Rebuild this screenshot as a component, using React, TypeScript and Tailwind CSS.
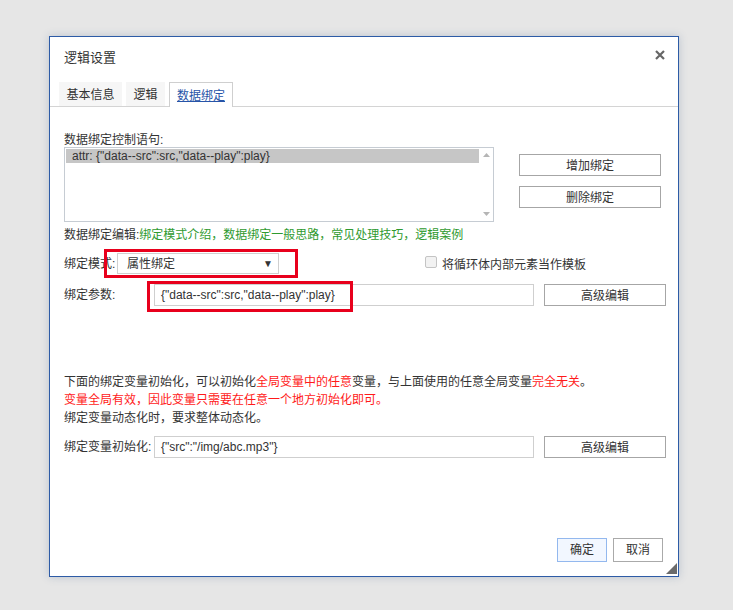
import React from 'react';

const font = { fontFamily: '"Liberation Sans", "Noto Sans CJK SC", sans-serif' };

function Btn({ children, className = '' }: { children: React.ReactNode; className?: string }) {
  return (
    <button
      type="button"
      className={`h-[22px] border border-[#a6a6a6] bg-white pt-[2px] text-[12px] leading-[18px] text-[#333] ${className}`}
    >
      {children}
    </button>
  );
}

export default function App() {
  const tabs = [
    { t: '基本信息', w: 'w-[63px]' },
    { t: '逻辑', w: 'w-[39px]' },
    { t: '数据绑定', w: 'w-[64px]' },
  ];

  return (
    <div className="min-h-screen bg-[#e6e6e6] pt-[36px] pl-[49px]" style={font}>
      <div className="relative flex h-[541px] w-[630px] flex-col border border-[#2d5ba6] bg-white text-[12px] text-[#333] shadow-[0_0_8px_rgba(60,90,140,0.25)]">
        {/* header */}
        <div className="flex h-[45px] items-start justify-between pl-[14px] pr-[13px] pt-[11px]">
          <span className="text-[13px] leading-[19px]">逻辑设置</span>
          <svg width="10" height="10" viewBox="0 0 10 10" className="mt-[2px]">
            <path d="M1 1L9 9M9 1L1 9" stroke="#666" strokeWidth="2.2" />
          </svg>
        </div>

        {/* tabs */}
        <div className="flex h-[25px] items-end gap-[4px] border-b border-[#d4d4d4] pl-[9px]">
          {tabs.map(({ t, w }, i) =>
            i === 2 ? (
              <div
                key={t}
                className={`mb-[-1px] flex h-[25px] items-center justify-center border border-b-0 border-[#cfcfcf] bg-white pt-[2px] text-[#2754a8] underline ${w}`}
              >
                {t}
              </div>
            ) : (
              <div key={t} className={`flex h-[24px] items-center justify-center bg-[#f6f6f6] pt-[2px] ${w}`}>
                {t}
              </div>
            )
          )}
        </div>

        {/* body */}
        <div className="flex flex-col pl-[14px]">
          <div className="mt-[25px] leading-[16px]">数据绑定控制语句:</div>

          <div className="mt-[-1px] flex items-start">
            <div className="flex h-[75px] w-[430px] border border-[#c6ccd3] bg-white">
              <div className="flex-1 pl-[1px] pt-[1px]">
                <div className="h-[14px] bg-[#c6c6c6] pl-[6px] leading-[14px]">
                  attr: {'{"data--src":src,"data--play":play}'}
                </div>
              </div>
              <div className="flex w-[14px] flex-col items-center justify-between py-[5px]">
                <svg width="7" height="4" viewBox="0 0 7 4">
                  <path d="M0 4L3.5 0L7 4Z" fill="#b5b5b5" />
                </svg>
                <svg width="7" height="4" viewBox="0 0 7 4">
                  <path d="M0 0L3.5 4L7 0Z" fill="#b5b5b5" />
                </svg>
              </div>
            </div>
            <div className="ml-[25px] mt-[7px] flex flex-col gap-[10px]">
              <Btn className="w-[142px]">增加绑定</Btn>
              <Btn className="w-[142px]">删除绑定</Btn>
            </div>
          </div>

          <div className="mt-[5px] leading-[16px]">
            数据绑定编辑:
            <span className="text-[#2f9a2f]">绑定模式介绍，数据绑定一般思路，常见处理技巧，逻辑案例</span>
          </div>

          <div className="mt-[10px] flex h-[21px] items-center">
            <span className="w-[53px]">绑定模式:</span>
            <div className="flex h-[21px] w-[162px] items-center justify-between border border-[#cfcfcf] bg-white pl-[9px] pr-[5px]">
              <span className="pt-[1px]">属性绑定</span>
              <span className="text-[10px]">▼</span>
            </div>
            <div className="ml-[146px] flex items-center">
              <span className="mb-[3px] h-[12px] w-[12px] rounded-[2px] border border-[#c4c4c4] bg-[#f2f2f2]" />
              <span className="ml-[5px] mt-[2px]">将循环体内部元素当作模板</span>
            </div>
          </div>

          <div className="mt-[10px] flex h-[22px] items-center">
            <span className="w-[90px]">绑定参数:</span>
            <div className="flex h-[22px] w-[380px] items-center border border-[#cfcfcf] bg-white pl-[6px]">
              {'{"data--src":src,"data--play":play}'}
            </div>
            <Btn className="ml-[10px] w-[122px]">高级编辑</Btn>
          </div>

          <div className="mt-[67px] leading-[18px]">
            <div>
              下面的绑定变量初始化，可以初始化<span className="text-[#ff1a1a]">全局变量中的任意</span>
              变量，与上面使用的任意全局变量<span className="text-[#ff1a1a]">完全无关</span>。
            </div>
            <div className="text-[#ff1a1a]">变量全局有效，因此变量只需要在任意一个地方初始化即可。</div>
            <div>绑定变量动态化时，要求整体动态化。</div>
          </div>

          <div className="mt-[9px] flex h-[22px] items-center">
            <span className="w-[90px]">绑定变量初始化:</span>
            <div className="flex h-[22px] w-[380px] items-center border border-[#cfcfcf] bg-white pl-[6px]">
              {'{"src":"/img/abc.mp3"}'}
            </div>
            <Btn className="ml-[10px] w-[122px]">高级编辑</Btn>
          </div>
        </div>

        {/* footer */}
        <div className="mt-auto flex justify-end gap-[6px] pb-[14px] pr-[15px]">
          <button
            type="button"
            className="h-[24px] w-[50px] border border-[#93b8ee] bg-[#f2f7ff] text-[12px] text-[#333]"
          >
            确定
          </button>
          <button
            type="button"
            className="h-[24px] w-[50px] border border-[#aaaaaa] bg-white text-[12px] text-[#333]"
          >
            取消
          </button>
        </div>

        {/* resize grip */}
        <svg width="11" height="11" viewBox="0 0 11 11" className="absolute bottom-[2px] right-[1px]">
          <path d="M11 0L11 11L0 11Z" fill="#6b6b6b" />
        </svg>

        {/* red annotation boxes */}
        <div className="pointer-events-none absolute left-[54px] top-[212px] h-[29px] w-[194px] border-[3px] border-[#e8001c]" />
        <div className="pointer-events-none absolute left-[97px] top-[244px] h-[31px] w-[206px] border-[3px] border-[#e8001c]" />
      </div>
    </div>
  );
}
